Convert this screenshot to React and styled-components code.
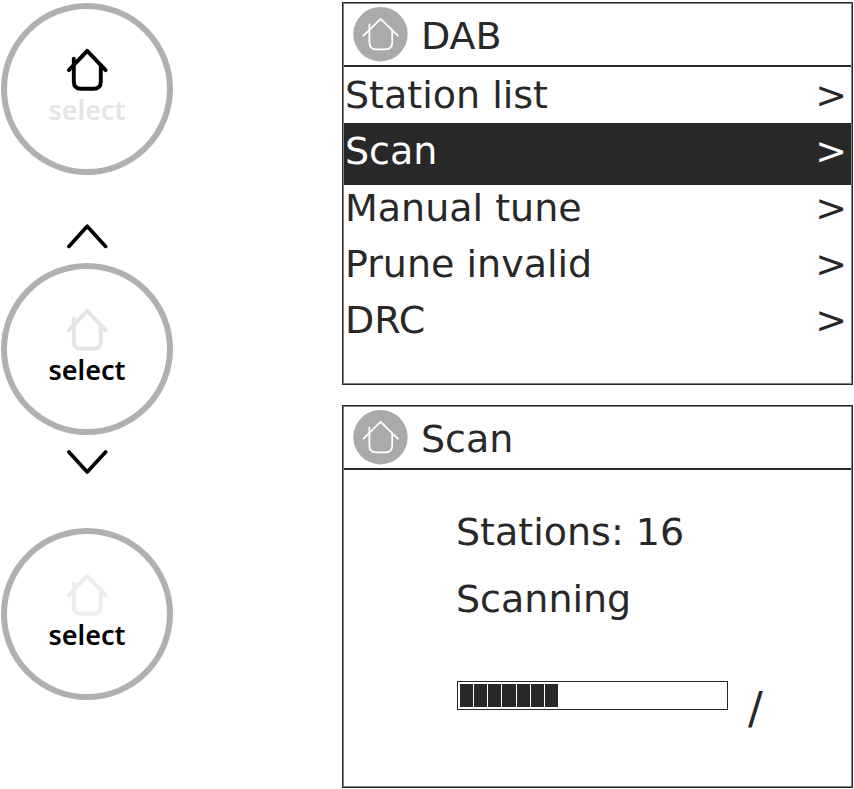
import React from 'react';
import styled, { createGlobalStyle } from 'styled-components';

const ink = '#282828';
const ring = '#b0b0b0';

const GlobalStyle = createGlobalStyle`
  * {
    box-sizing: border-box;
  }

  body {
    margin: 0;
    background: #fff;
    color: ${ink};
    font-family: 'DejaVu Sans', Verdana, sans-serif;
    font-size: 38px;
  }

  button {
    margin: 0;
    padding: 0;
    border: 0;
    background: none;
    color: inherit;
    font: inherit;
    cursor: pointer;
  }
`;

const Page = styled.main`
  display: flex;
  align-items: flex-start;
  gap: 169px;
  padding: 2px 1px 1px;
`;

const Controls = styled.div`
  flex: none;
  display: flex;
  flex-direction: column;
  gap: 49px;
  padding-top: 1px;
`;

const Navigate = styled.div`
  display: flex;
  flex-direction: column;
  align-items: center;
  gap: 13px;
  padding-bottom: 5px;
`;

const ArrowButton = styled.button`
  display: flex;
  height: 26px;
`;

const Dial = styled.button`
  display: flex;
  flex-direction: column;
  align-items: center;
  gap: 4px;
  width: 172px;
  height: 172px;
  padding-top: 39px;
  border: 6px solid ${ring};
  border-radius: 50%;
`;

const DialHome = styled.svg`
  display: block;
  color: ${props => props.$tone};
`;

const DialLabel = styled.span`
  color: ${props => props.$tone};
  font-family: 'Noto Sans', 'Open Sans', sans-serif;
  font-size: 27px;
  font-weight: 600;
  line-height: 28px;
`;

const Screens = styled.div`
  flex: 1;
  min-width: 0;
  display: flex;
  flex-direction: column;
  gap: 20px;
`;

const Screen = styled.section`
  min-height: 383px;
  padding: 1px;
  border: 1px solid ${ink};
  box-shadow: inset 0 0 0 1px #808080;
`;

const ScreenHeader = styled.header`
  display: flex;
  align-items: center;
  gap: 13px;
  height: 63px;
  padding-left: 9px;
  border-bottom: 2px solid ${ink};
`;

const Title = styled.h1`
  margin: 0;
  padding-top: 2px;
  font-size: 38px;
  font-weight: 400;
  line-height: 56px;
`;

const Menu = styled.ul`
  margin: 0;
  padding: 0;
  list-style: none;
`;

const MenuItem = styled.button`
  display: flex;
  justify-content: space-between;
  width: 100%;
  padding: 0 4px 0 1px;
  line-height: 56px;
  text-align: left;

  /* the highlight bar reaches a little under the next row */
  &[aria-current='true'] {
    margin-bottom: -5px;
    padding-bottom: 6px;
    background: ${ink};
    color: #fff;
  }
`;

const Status = styled.div`
  display: flex;
  flex-direction: column;
  padding: 29px 24px 0 112px;
`;

const Line = styled.p`
  margin: 0;
  line-height: 67px;
`;

const ProgressRow = styled.div`
  display: flex;
  align-items: flex-start;
  gap: 20px;
  padding: 48px 0 0 1px;
`;

const Track = styled.div`
  width: 271px;
  height: 29px;
  padding: 2px;
  border: 1px solid ${ink};
`;

const Fill = styled.div`
  display: flex;
  gap: 1px;
  height: 100%;
`;

const Block = styled.i`
  flex: 1;
  background: ${ink};
`;

const Spinner = styled.span`
  font-size: 44px;
  line-height: 56px;
`;

const HomeIcon = ({ tone }) => (
  <DialHome $tone={tone} width="44" height="44" viewBox="0 0 44 44" aria-hidden="true">
    <g fill="none" stroke="currentColor" strokeWidth="3.9" strokeLinecap="round" strokeLinejoin="round">
      <path d="M3.9 22.2 22.2 2.9 40.6 22.2" />
      <path d="M8.8 10.8V33.5Q8.8 40.8 16 40.8H28.5Q35.8 40.8 35.8 33.5V18" />
    </g>
  </DialHome>
);

const HomeBadge = () => (
  <svg width="55" height="55" viewBox="0 0 55 55" aria-hidden="true">
    <circle cx="27.5" cy="27.2" r="27.2" fill="#aaa" />
    <g fill="none" stroke="#fff" strokeWidth="1.8" strokeLinecap="round" strokeLinejoin="round">
      <path d="M10.5 28.7 27.6 11.9 44.8 28.7" />
      <path d="M16.4 17.5V35.5Q16.4 42.3 23 42.3H32.5Q39.2 42.3 39.2 35.5V23.7" />
    </g>
  </svg>
);

const Chevron = ({ d }) => (
  <svg width="44" height="26" viewBox="0 0 44 26" aria-hidden="true">
    <path d={d} fill="none" stroke="#000" strokeWidth="3.7" strokeLinecap="round" strokeLinejoin="round" />
  </svg>
);

const DialButton = ({ home, label, name }) => (
  <Dial aria-label={name}>
    <HomeIcon tone={home} />
    <DialLabel $tone={label}>select</DialLabel>
  </Dial>
);

const Header = ({ children }) => (
  <ScreenHeader>
    <HomeBadge />
    <Title>{children}</Title>
  </ScreenHeader>
);

const items = ['Station list', 'Scan', 'Manual tune', 'Prune invalid', 'DRC'];
const selected = 'Scan';
const progress = { percent: 37, blocks: 7 };

const App = () => (
  <>
    <GlobalStyle />
    <Page>
      <Controls>
        <DialButton name="Home" home="#000" label="#e4e4e4" />
        <Navigate>
          <ArrowButton aria-label="Up">
            <Chevron d="M3.9 22.4 22.2 2.2 40.6 22.4" />
          </ArrowButton>
          <DialButton name="select" home="#e4e4e4" label="#000" />
          <ArrowButton aria-label="Down">
            <Chevron d="M3.9 4 22.2 24 40.6 4" />
          </ArrowButton>
        </Navigate>
        <DialButton name="select" home="#ededed" label="#000" />
      </Controls>

      <Screens>
        <Screen>
          <Header>DAB</Header>
          <Menu>
            {items.map(item => (
              <li key={item}>
                <MenuItem aria-current={item === selected}>
                  <span>{item}</span>
                  <span aria-hidden="true">&gt;</span>
                </MenuItem>
              </li>
            ))}
          </Menu>
        </Screen>

        <Screen>
          <Header>Scan</Header>
          <Status>
            <Line>Stations: 16</Line>
            <Line>Scanning</Line>
            <ProgressRow>
              <Track role="progressbar" aria-label="Scanning" aria-valuenow={progress.percent}>
                <Fill style={{ width: `${progress.percent}%` }}>
                  {Array.from({ length: progress.blocks }, (_, i) => <Block key={i} />)}
                </Fill>
              </Track>
              <Spinner>/</Spinner>
            </ProgressRow>
          </Status>
        </Screen>
      </Screens>
    </Page>
  </>
);

export default App;
